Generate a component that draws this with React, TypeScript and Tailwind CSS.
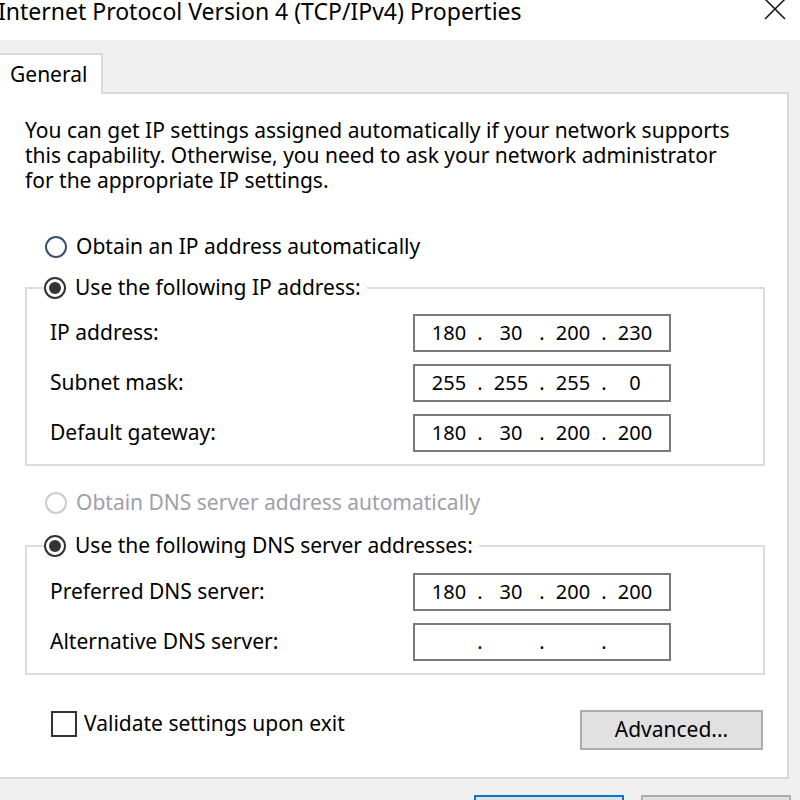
import React from "react";

const font = { fontFamily: '"Noto Sans", "Open Sans", sans-serif' };

const Radio = ({ checked, disabled }: { checked?: boolean; disabled?: boolean }) => (
  <span
    className={`flex h-[22px] w-[22px] shrink-0 items-center justify-center rounded-full border-2 bg-white ${
      disabled ? "border-[#cccccc]" : checked ? "border-[#333333]" : "border-[#3b5266]"
    }`}
  >
    {checked && <span className="h-[12px] w-[12px] rounded-full bg-[#333333]" />}
  </span>
);

const IpField = ({ parts }: { parts: string[] }) => (
  <div className="flex h-[38px] w-[258px] items-center border-2 border-[#7a7a7a] bg-white pl-[8px] text-[20px] text-black">
    {parts.map((p, i) => (
      <React.Fragment key={i}>
        {i > 0 && <span className="w-[10px] text-center">.</span>}
        <span className="w-[52px] text-center">{p}</span>
      </React.Fragment>
    ))}
  </div>
);

const Row = ({ label, parts }: { label: string; parts: string[] }) => (
  <div className="flex items-center justify-between pr-[92px]">
    <span className="text-[21px] text-black">{label}</span>
    <IpField parts={parts} />
  </div>
);

const App = () => {
  return (
    <div className="h-[800px] w-[800px] overflow-hidden bg-[#f0f0f0]" style={font}>
      {/* title bar */}
      <div className="flex h-[40px] items-start justify-between bg-white">
        <span className="-ml-[2px] -mt-[1px] text-[23px] leading-[24px] text-black">
          Internet Protocol Version 4 (TCP/IPv4) Properties
        </span>
        <svg width="22" height="22" viewBox="0 0 22 22" className="mr-[14px] -mt-[2px]">
          <path d="M1 1 L21 21 M21 1 L1 21" stroke="#111" strokeWidth="1.5" />
        </svg>
      </div>

      {/* tabs */}
      <div className="mt-[13px] flex">
        <div className="relative z-10 -mb-[2px] -ml-[2px] flex h-[41px] w-[105px] items-center border-2 border-b-0 border-[#d9d9d9] bg-white pl-[10px] text-[21px] text-black">
          General
        </div>
      </div>
      <div className="-ml-[2px] h-[687px] w-[791px] border-2 border-[#d9d9d9] bg-white pl-[25px] pr-[22px] pt-[24px]">
        <p className="text-[21px] leading-[25px] text-black">
          You can get IP settings assigned automatically if your network supports
          <br />
          this capability. Otherwise, you need to ask your network administrator
          <br />
          for the appropriate IP settings.
        </p>

        <div className="ml-[20px] mt-[41px] flex h-[26px] items-center gap-[9px] text-[21px] text-black">
          <Radio />
          <span>Obtain an IP address automatically</span>
        </div>

        <fieldset className="mt-[15px] border-2 border-[#dcdcdc] pb-[12px]">
          <legend className="ml-[17px] flex h-[26px] items-center gap-[9px] pr-[6px] text-[21px] text-black">
            <Radio checked />
            <span>Use the following IP address:</span>
          </legend>
          <div className="mt-[13px] flex flex-col gap-[12px] pl-[23px]">
            <Row label="IP address:" parts={["180", "30", "200", "230"]} />
            <Row label="Subnet mask:" parts={["255", "255", "255", "0"]} />
            <Row label="Default gateway:" parts={["180", "30", "200", "200"]} />
          </div>
        </fieldset>

        <div className="ml-[20px] mt-[24px] flex h-[26px] items-center gap-[9px] text-[21px] text-[#a0a0a8]">
          <Radio disabled />
          <span>Obtain DNS server address automatically</span>
        </div>

        <fieldset className="mt-[17px] border-2 border-[#dcdcdc] pb-[12px]">
          <legend className="ml-[17px] flex h-[26px] items-center gap-[9px] pr-[6px] text-[21px] text-black">
            <Radio checked />
            <span>Use the following DNS server addresses:</span>
          </legend>
          <div className="mt-[14px] flex flex-col gap-[12px] pl-[23px]">
            <Row label="Preferred DNS server:" parts={["180", "30", "200", "200"]} />
            <Row label="Alternative DNS server:" parts={["", "", "", ""]} />
          </div>
        </fieldset>

        <div className="mt-[33px] flex items-start justify-between">
          <div className="ml-[26px] flex items-center gap-[7px] text-[21px] text-black">
            <span className="h-[26px] w-[26px] border-2 border-[#333333] bg-white" />
            <span>Validate settings upon exit</span>
          </div>
          <button className="mr-[2px] mt-[2px] h-[40px] w-[183px] border-2 border-[#adadad] bg-[#e1e1e1] text-[21px] text-black">
            Advanced...
          </button>
        </div>
      </div>

      {/* dialog buttons */}
      <div className="mt-[16px] flex justify-end gap-[17px] pr-[9px]">
        <button className="h-[40px] w-[150px] border-2 border-[#0078d7] bg-[#e1e1e1] text-[21px]">OK</button>
        <button className="h-[40px] w-[150px] border-2 border-[#adadad] bg-[#e1e1e1] text-[21px]">Cancel</button>
      </div>
    </div>
  );
};

export default App;
